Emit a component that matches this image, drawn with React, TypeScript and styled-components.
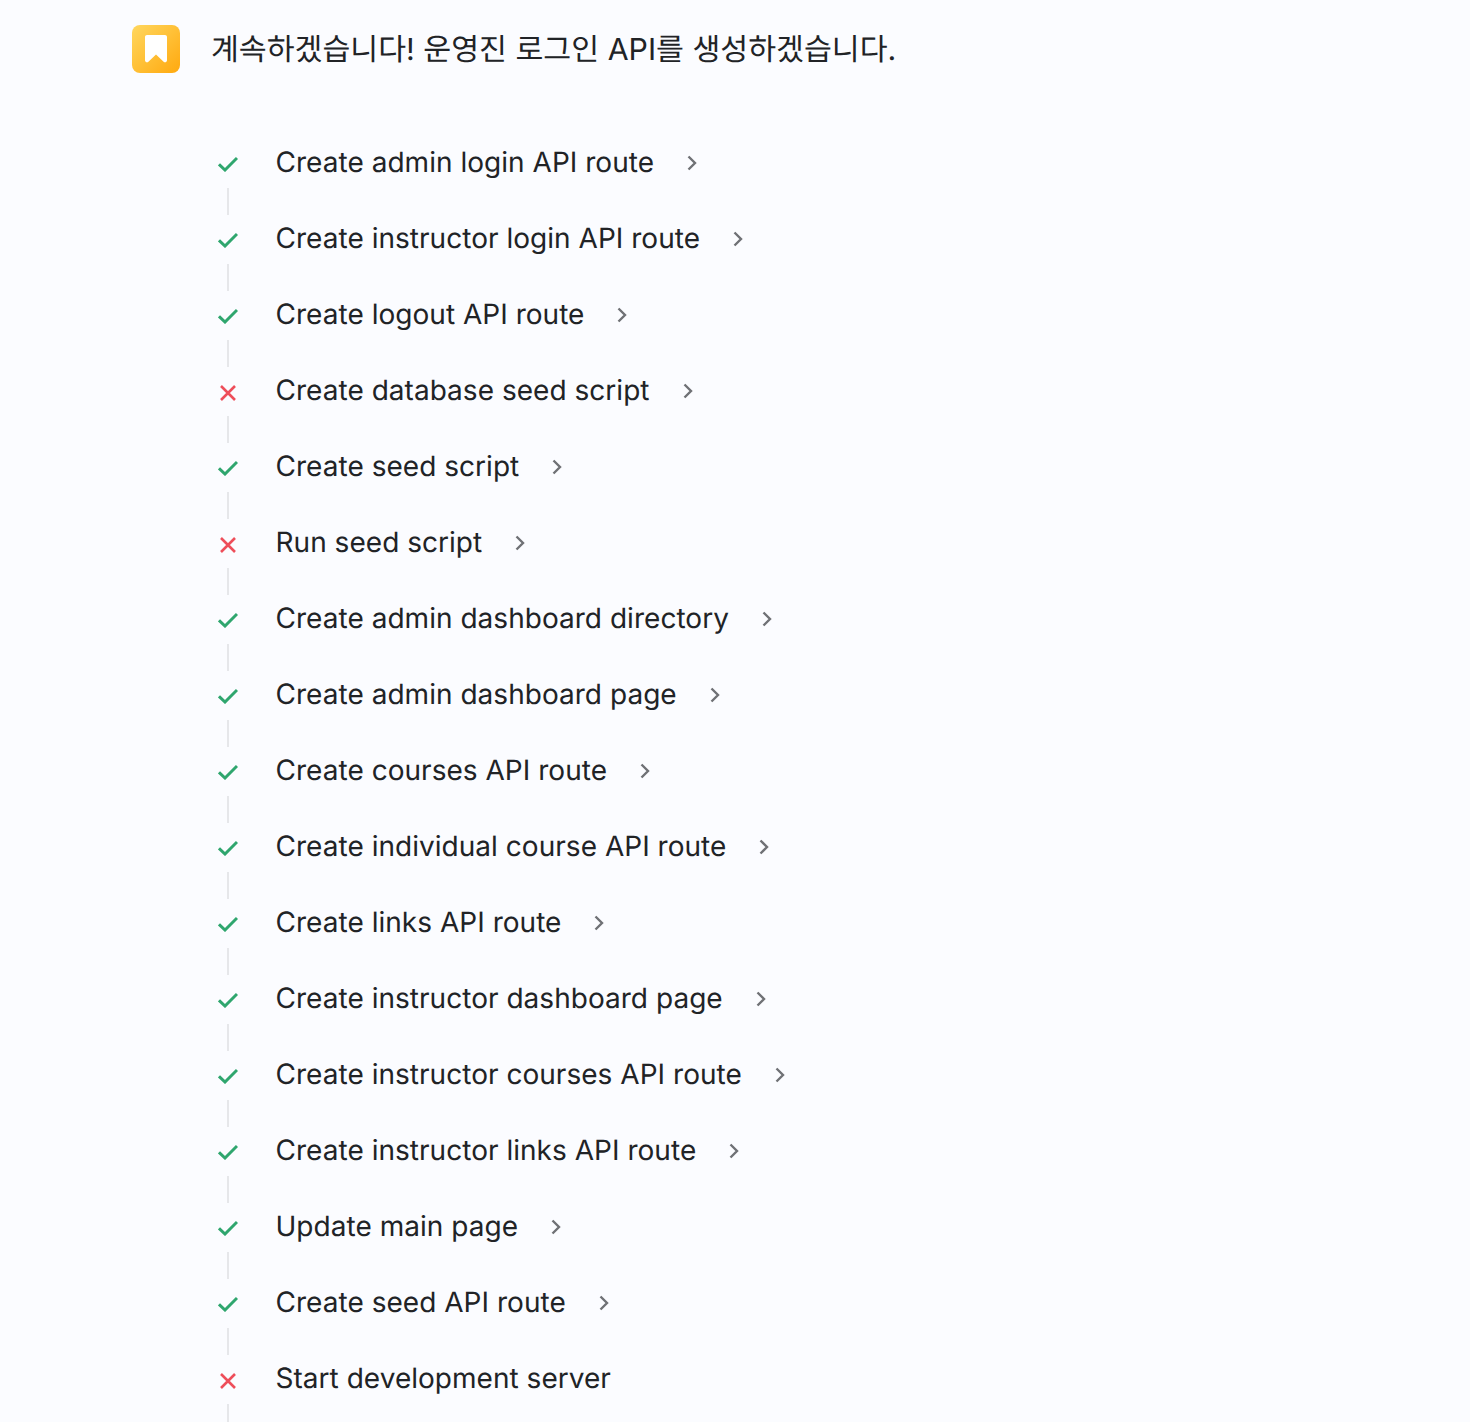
import React from 'react';
import styled, { createGlobalStyle } from 'styled-components';

const steps = [
  { label: 'Create admin login API route', ok: true },
  { label: 'Create instructor login API route', ok: true },
  { label: 'Create logout API route', ok: true },
  { label: 'Create database seed script', ok: false },
  { label: 'Create seed script', ok: true },
  { label: 'Run seed script', ok: false },
  { label: 'Create admin dashboard directory', ok: true },
  { label: 'Create admin dashboard page', ok: true },
  { label: 'Create courses API route', ok: true },
  { label: 'Create individual course API route', ok: true },
  { label: 'Create links API route', ok: true },
  { label: 'Create instructor dashboard page', ok: true },
  { label: 'Create instructor courses API route', ok: true },
  { label: 'Create instructor links API route', ok: true },
  { label: 'Update main page', ok: true },
  { label: 'Create seed API route', ok: true },
  { label: 'Start development server', ok: false, last: true },
];

function App(): React.ReactElement {
  return (
    <>
      <GlobalStyle />
      <Page>
        <Header>
          <Logo>
            <svg width="24" height="30" viewBox="0 0 24 30">
              <path
                d="M1 3C1 1.900 1.900 1 3 1h18c1.100 0 2 .9 2 2v23.200c0 1.800-2.100 2.700-3.400 1.500L12 20.500l-7.600 7.200C3.100 28.900 1 28 1 26.200z"
                fill="#fff"
              />
            </svg>
          </Logo>
          <Message>계속하겠습니다! 운영진 로그인 API를 생성하겠습니다.</Message>
        </Header>
        <Steps>
          {steps.map((step) => (
            <Step key={step.label}>
              <Row>
                <Status $failed={!step.ok}>
                  {step.ok ? (
                    <svg width="20" height="16" viewBox="0 0 20 16" fill="none">
                      <path d="M1 8.300L7 14L19 2" stroke="#2fa66e" strokeWidth="3" />
                    </svg>
                  ) : (
                    <svg width="18" height="18" viewBox="0 0 18 18" fill="none">
                      <path d="M2 2L16 16M16 2L2 16" stroke="#ee4e5a" strokeWidth="2.600" />
                    </svg>
                  )}
                </Status>
                <Label>{step.label}</Label>
                {!step.last && (
                  <Chevron width="10" height="16" viewBox="0 0 10 16" fill="none">
                    <path d="M1.500 1.500L8 8L1.500 14.500" stroke="#6f7175" strokeWidth="2.400" />
                  </Chevron>
                )}
              </Row>
              <Connector />
            </Step>
          ))}
        </Steps>
      </Page>
    </>
  );
}

export default App;

const GlobalStyle = createGlobalStyle`
  html, body {
    margin: 0;
    padding: 0;
    background: #fbfcff;
  }
`;
const Page = styled.div`
  width: 1470px;
  height: 1422px;
  overflow: hidden;
  box-sizing: border-box;
  padding: 25px 0 0 132px;
  background: #fbfcff;
  font-family: Inter, 'Noto Sans CJK KR', sans-serif;
  color: #212326;
  text-rendering: geometricPrecision;
`;
const Header = styled.div`
  display: flex;
  align-items: center;
  gap: 31px;
  height: 48px;
`;
const Logo = styled.div`
  width: 48px;
  height: 48px;
  border-radius: 8px;
  display: flex;
  align-items: center;
  justify-content: center;
  background: linear-gradient(135deg, #ffd75e, #ffa90f);
`;
const Message = styled.div`
  font-size: 30.300px;
  line-height: 48px;
  padding-top: 1px;
`;
const Steps = styled.div`
  display: flex;
  flex-direction: column;
  margin: 66px 0 0 76px;
`;
const Step = styled.div`
  display: flex;
  flex-direction: column;
`;
const Row = styled.div`
  display: flex;
  align-items: center;
  height: 49px;
`;
const Status = styled.div<{ $failed: boolean }>`
  width: 40px;
  display: flex;
  justify-content: center;
  margin-right: 27.500px;
  padding-top: ${(p) => (p.$failed ? 3 : 1)}px;
`;
const Label = styled.div`
  font-size: 28px;
  line-height: 48px;
  letter-spacing: 0.030px;
  padding-bottom: 3px;
`;
const Chevron = styled.svg`
  margin: 0 0 1px 33px;
`;
const Connector = styled.div`
  width: 2px;
  height: 27px;
  margin-left: 19px;
  background: #e6e7ea;
`;
